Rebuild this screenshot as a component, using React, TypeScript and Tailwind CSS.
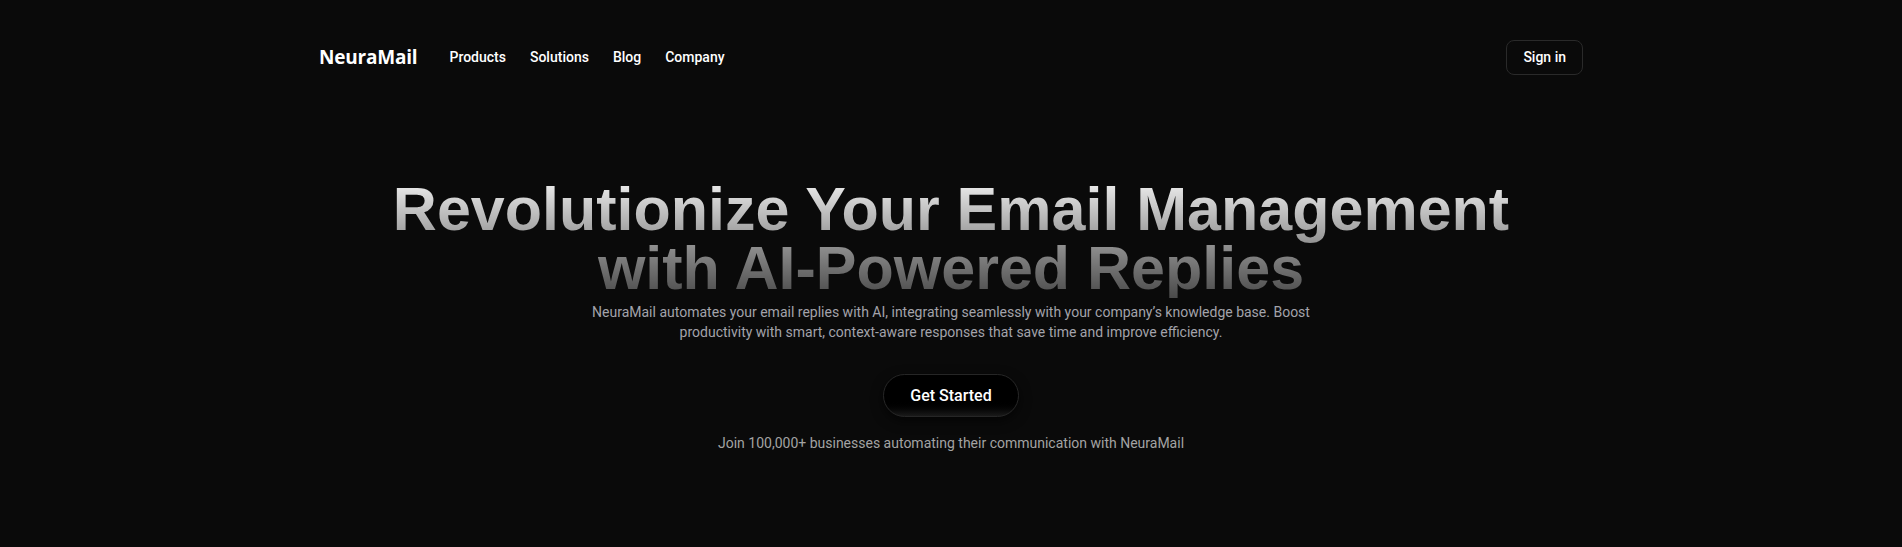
import React from "react";

export default function App() {
  return (
    <div className="min-h-[547px] w-full bg-[#0a0a0a] text-white font-['Roboto',sans-serif]">
      <header className="mx-auto flex max-w-[1264px] items-center justify-between pt-[40px]">
        <div className="flex items-center gap-8">
          <span className="text-[19px] font-bold tracking-[-0.2px] text-white font-['Open_Sans',sans-serif]">NeuraMail</span>
          <nav className="flex items-center gap-6 text-[14px] font-medium text-white">
            <a>Products</a>
            <a>Solutions</a>
            <a>Blog</a>
            <a>Company</a>
          </nav>
        </div>
        <button className="h-[35px] rounded-lg border border-[#2a2a2a] bg-[#0a0a0a] px-4 text-[14px] font-medium text-white">
          Sign in
        </button>
      </header>

      <main className="flex flex-col items-center pt-[105px] text-center">
        <h1 className="bg-gradient-to-b from-[#f0f0f0] to-[#4a4a4a] bg-clip-text text-[61px] font-bold leading-[59px] text-transparent font-['Liberation_Sans',Arial,sans-serif]">
          Revolutionize Your Email Management
          <br />
          with AI-Powered Replies
        </h1>
        <p className="mt-[4px] text-[14px] leading-[20px] text-[#a3a3ab]">
          NeuraMail automates your email replies with AI, integrating seamlessly with your company’s knowledge base. Boost
          <br />
          productivity with smart, context-aware responses that save time and improve efficiency.
        </p>
        <button className="mt-8 h-[43px] rounded-full border border-[#262626] bg-gradient-to-b from-black from-60% to-[#1a1a1a] px-[26px] text-[16px] font-medium text-white shadow-[0_4px_12px_rgba(0,0,0,0.6)]">
          Get Started
        </button>
        <p className="mt-4 text-[14px] leading-[20px] text-[#a3a3a3]">
          Join 100,000+ businesses automating their communication with NeuraMail
        </p>
      </main>
    </div>
  );
}
